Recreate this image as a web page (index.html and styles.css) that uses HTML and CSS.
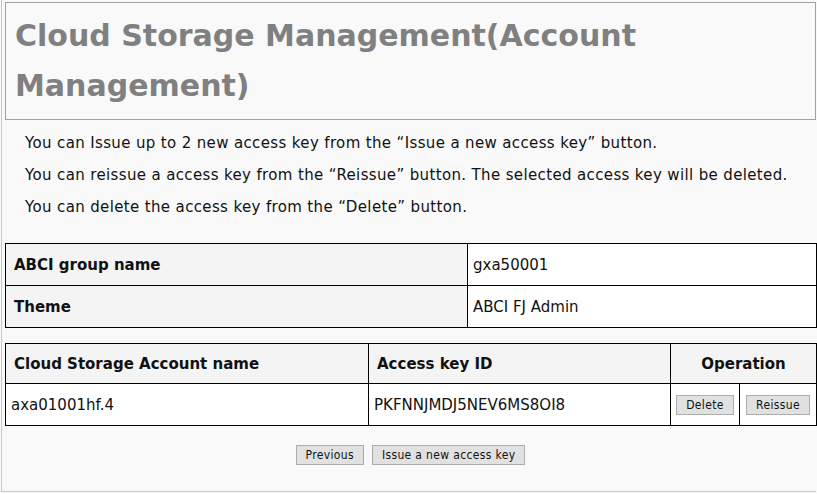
FILE: index.html
```html
<!DOCTYPE html>
<html lang="en">
<head>
<meta charset="utf-8">
<title>Cloud Storage Management(Account Management)</title>
<link rel="stylesheet" href="styles.css">
</head>
<body>
<div class="page">
  <div class="title-box">
    <h1 class="title">Cloud Storage Management(Account Management)</h1>
  </div>
  <div class="notes">
    <p>You can Issue up to 2 new access key from the “Issue a new access key” button.</p>
    <p>You can reissue a access key from the “Reissue” button. The selected access key will be deleted.</p>
    <p>You can delete the access key from the “Delete” button.</p>
  </div>
  <table class="grid info">
    <colgroup><col class="c-info1"><col></colgroup>
    <tr><th>ABCI group name</th><td>gxa50001</td></tr>
    <tr><th>Theme</th><td>ABCI FJ Admin</td></tr>
  </table>
  <table class="grid keys">
    <colgroup><col class="c-acct"><col class="c-key"><col class="c-del"><col></colgroup>
    <tr class="head"><th>Cloud Storage Account name</th><th>Access key ID</th><th colspan="2" class="center">Operation</th></tr>
    <tr class="data"><td>axa01001hf.4</td><td>PKFNNJMDJ5NEV6MS8OI8</td><td class="op"><button class="btn">Delete</button></td><td class="op"><button class="btn">Reissue</button></td></tr>
  </table>
  <div class="actions">
    <button class="btn">Previous</button>
    <button class="btn">Issue a new access key</button>
  </div>
</div>
</body>
</html>
```

FILE: styles.css
```css
html, body {
  margin: 0;
  padding: 0;
  background: #f9f9f9;
}
body {
  font-family: "DejaVu Sans", Verdana, sans-serif;
  color: #111;
  overflow: hidden;
}
.page {
  margin-left: 1px;
  width: 815px;
  height: 492px;
  border-left: 1px solid #c8c8c8;
  border-bottom: 1px solid #c8c8c8;
  padding: 2px 0 0 3px;
  box-sizing: border-box;
  display: flex;
  flex-direction: column;
}
.title-box {
  border: 1px solid #a0a0a0;
  padding: 8px 9px;
  background: #f9f9f9;
}
.title {
  margin: 0;
  font-size: 30px;
  line-height: 50px;
  font-weight: bold;
  color: #808080;
}
.notes {
  padding: 7px 0 20px 20px;
}
.notes p {
  margin: 0;
  font-size: 15px;
  line-height: 32px;
  letter-spacing: 0.36px;
}
.grid {
  width: 812px;
  border-collapse: collapse;
  table-layout: fixed;
  font-size: 15px;
}
.grid th, .grid td {
  border: 1px solid #000;
  text-align: left;
  white-space: nowrap;
}
.grid th {
  background: #f4f4f4;
  font-weight: bold;
  padding: 0 8px;
}
.grid td {
  background: #fff;
  padding: 0 5px;
}
.grid th.center { text-align: center; }
.info tr { height: 42px; }
.c-info1 { width: 462px; }
.keys { margin-top: 15px; }
.keys tr.head { height: 40px; }
.keys tr.data { height: 42px; }
.c-acct { width: 363px; }
.c-key { width: 302px; }
.c-del { width: 69px; }
.grid td.op { text-align: center; padding: 0; }
.btn {
  font-family: "DejaVu Sans Condensed", "DejaVu Sans", sans-serif;
  font-size: 12px;
  letter-spacing: 0.35px;
  color: #111;
  background: #e1e1e1;
  border: 1px solid #adadad;
  border-radius: 0;
  height: 20px;
  padding: 0 9px;
  margin: 0;
  line-height: 18px;
}
.actions {
  display: flex;
  justify-content: center;
  gap: 8px;
  margin-top: 19px;
}
```
